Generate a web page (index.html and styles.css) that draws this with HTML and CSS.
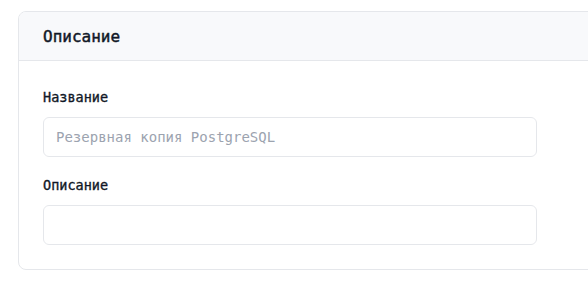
FILE: index.html
```html
<!DOCTYPE html>
<html lang="ru">
<head>
    <meta charset="UTF-8">
    <meta name="viewport" content="width=device-width, initial-scale=1.0">
    <title>Описание</title>
    <link rel="stylesheet" href="styles.css">
</head>
<body>
    <div class="card">
        <div class="card-header">Описание</div>
        <div class="card-body">
            <div class="field">
                <label for="name">Название</label>
                <input type="text" id="name" placeholder="Резервная копия PostgreSQL">
            </div>
            <div class="field">
                <label for="description">Описание</label>
                <input type="text" id="description">
            </div>
        </div>
    </div>
</body>
</html>
```

FILE: styles.css
```css
body {
    font-family: "DejaVu Sans Mono", monospace;
    background: #ffffff;
    margin: 0;
    padding: 11px 0 0 18px;
    overflow: hidden;
}
.card {
    width: 640px;
    border: 1px solid #e5e7eb;
    border-radius: 8px;
    background: white;
    overflow: hidden;
}
.card-header {
    background: #f8f9fb;
    border-bottom: 1px solid #e5e7eb;
    padding: 0 24px;
    height: 48px;
    display: flex;
    align-items: center;
    font-size: 16px;
    font-weight: 400;
    color: #111827;
    -webkit-text-stroke: 0.45px #111827;
}
.card-body {
    padding: 26px 24px 24px;
    display: flex;
    flex-direction: column;
    gap: 18px;
}
.field {
    display: flex;
    flex-direction: column;
    gap: 10px;
}
label {
    font-size: 13.5px;
    font-weight: 400;
    line-height: 20px;
    color: #111827;
    -webkit-text-stroke: 0.35px #111827;
}
input {
    width: 494px;
    height: 40px;
    box-sizing: border-box;
    padding: 0 12px;
    border: 1px solid #e5e7eb;
    border-radius: 6px;
    font-family: "DejaVu Sans Mono", monospace;
    font-size: 14px;
    color: #1f2937;
    background: white;
}
input::placeholder {
    color: #9ca3af;
}
```
